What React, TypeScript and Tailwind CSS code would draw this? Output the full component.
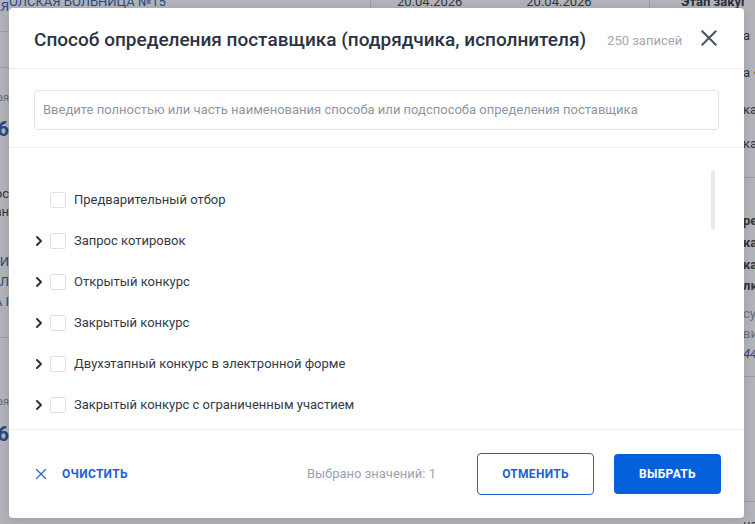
import React from 'react';

const items = [
  { label: 'Предварительный отбор', nested: false },
  { label: 'Запрос котировок', nested: true },
  { label: 'Открытый конкурс', nested: true },
  { label: 'Закрытый конкурс', nested: true },
  { label: 'Двухэтапный конкурс в электронной форме', nested: true },
  { label: 'Закрытый конкурс с ограниченным участием', nested: true },
];

function Chevron() {
  return (
    <svg width="10" height="12" viewBox="0 0 10 12" fill="none">
      <path d="M3 2l4 4-4 4" stroke="#2b3240" strokeWidth="2" strokeLinecap="round" strokeLinejoin="round" />
    </svg>
  );
}

function Cross({ size, color, width }: { size: number; color: string; width: number }) {
  return (
    <svg width={size} height={size} viewBox="0 0 16 16" fill="none">
      <path d="M2 2l12 12M14 2L2 14" stroke={color} strokeWidth={width} strokeLinecap="round" />
    </svg>
  );
}

// the page behind the dialog, only its edges show
function Backdrop() {
  return (
    <div className="flex h-full w-full bg-white text-[13px]">
      <div className="w-[9px] shrink-0 overflow-hidden">
        <div className="flex w-[200px] -ml-[191px] flex-col items-end whitespace-nowrap">
          <div className="h-[32px] border-b border-[#d9dde3] text-[#2c5cad] leading-[14px]">ГОРОДСКАЯ</div>
          <div className="h-[36px] w-full border-b border-[#d9dde3]" />
          <div className="mt-[22px] text-[11px] text-[#8b93a3]">Начальная</div>
          <div className="mt-[10px] text-[20px] font-bold text-[#2c5cad] leading-[24px]">1 246</div>
          <div className="mt-[44px] text-[#3b4150] leading-[18px]">Вопрос</div>
          <div className="text-[#3b4150] leading-[18px]">Наличие ан</div>
          <div className="mt-[31px] text-[#2c5cad] leading-[20px]">ПОСТАВКИ</div>
          <div className="text-[#2c5cad] leading-[20px]">МАТЕРИАЛ</div>
          <div className="text-[#2c5cad] leading-[20px]">СРЕДСТВА І</div>
          <div className="mt-[25px] h-px w-full bg-[#d9dde3]" />
          <div className="mt-[56px] text-[11px] text-[#8b93a3]">Начальная</div>
          <div className="mt-[12px] text-[20px] font-bold text-[#2c5cad] leading-[24px]">926</div>
        </div>
      </div>
      <div className="min-w-0 flex-1 overflow-hidden">
        <div className="flex h-[8px] overflow-hidden whitespace-nowrap text-[13px] leading-[12px]">
          <div className="-mt-[4px] -ml-[9px] w-[371px] shrink-0 border-r border-[#d9dde3] pl-[9px] text-[#2c5cad]">ОЛСКАЯ БОЛЬНИЦА №15"</div>
          <div className="-mt-[4px] flex w-[279px] shrink-0 gap-[64px] border-r border-[#d9dde3] pl-[26px] text-[#3b4150]">
            <span>20.04.2026</span>
            <span>20.04.2026</span>
          </div>
          <div className="-mt-[4px] shrink-0 pl-[31px] font-bold text-[#2d3341]">Этап закупки</div>
        </div>
      </div>
      <div className="w-[11px] shrink-0 overflow-hidden text-[13px]">
        <div className="-ml-[1px] w-[120px] whitespace-nowrap text-[#3b4150]">
          <div className="mt-[27px] leading-[18px]">а</div>
          <div className="mt-[19px] leading-[18px]">а <span className="text-[#e07b2a]">•</span></div>
          <div className="mt-[19px] leading-[18px]">ка</div>
          <div className="mt-[16px] leading-[18px]">ка</div>
          <div className="mt-[24px] h-px bg-[#d9dde3]" />
          <div className="mt-[32px] font-bold leading-[22px]">ре</div>
          <div className="font-bold leading-[22px]">ка</div>
          <div className="font-bold leading-[22px]">ка</div>
          <div className="font-bold leading-[20px]">лк</div>
          <div className="mt-[8px] leading-[20px] text-[#8b93a3]">су</div>
          <div className="leading-[20px] text-[#8b93a3]">ви</div>
          <div className="leading-[20px] italic text-[#2c5cad]">44</div>
          <div className="mt-[12px] h-px bg-[#d9dde3]" />
          <div className="mt-[124px] h-px bg-[#d9dde3]" />
          <div className="mt-[14px] leading-[18px]">на</div>
        </div>
      </div>
    </div>
  );
}

export default function App() {
  return (
    <div className="relative h-[524px] w-[755px] overflow-hidden" style={{ fontFamily: 'Roboto, "Noto Sans", sans-serif' }}>
      <Backdrop />
      <div className="absolute inset-0 bg-[rgba(31,37,51,0.35)]" />
      <div className="absolute left-[9px] top-[8px] flex h-[510px] w-[735px] flex-col rounded-[4px] bg-white shadow-[0_2px_10px_rgba(0,0,0,0.12)]">
        <div className="flex h-[61px] shrink-0 items-center border-b border-[#eceef2] pl-[25px] pr-[23px]">
          <h2 className="pt-[4px] text-[19px] font-medium leading-[24px] text-[#2d3341] whitespace-nowrap">
            Способ определения поставщика (подрядчика, исполнителя)
          </h2>
          <span className="ml-[21px] pt-[6px] text-[13px] text-[#a2a8b4]">250 записей</span>
          <button className="ml-auto flex h-[24px] w-[24px] items-center justify-center">
            <Cross size={18} color="#4b5161" width={1.8} />
          </button>
        </div>

        <div className="shrink-0 border-b border-[#eceef2] px-[25px] pb-[17px] pt-[21px]">
          <div className="flex h-[40px] items-center rounded-[4px] border border-[#e1e4e9] px-[8px] text-[13px] text-[#8e96a6]">
            Введите полностью или часть наименования способа или подспособа определения поставщика
          </div>
        </div>

        <div className="relative flex-1 overflow-hidden pt-[31px]">
          {items.map((it) => (
            <div key={it.label} className="flex h-[41px] items-center pl-[25px]">
              <div className="flex w-[16px] justify-start">{it.nested && <Chevron />}</div>
              <div className="h-[16px] w-[16px] rounded-[2px] border border-[#dde1e7] bg-white" />
              <span className="ml-[8px] text-[13px] text-[#333a48]">{it.label}</span>
            </div>
          ))}
          <div className="absolute right-[29px] top-[22px] h-[60px] w-[4px] rounded-full bg-[#e6e9ee]" />
        </div>

        <div className="flex h-[89px] shrink-0 items-center border-t border-[#eceef2] pl-[26px] pr-[23px]">
          <button className="flex items-center gap-[15px] text-[12px] font-bold tracking-[0.3px] text-[#1f61cf]">
            <Cross size={12} color="#2a66d0" width={1.7} />
            ОЧИСТИТЬ
          </button>
          <span className="ml-auto mr-[41px] text-[13px] text-[#9aa2b2]">Выбрано значений: 1</span>
          <button className="h-[42px] w-[117px] rounded-[4px] border border-[#1f61cf] text-[12px] font-bold tracking-[0.3px] text-[#1f61cf]">
            ОТМЕНИТЬ
          </button>
          <button className="ml-[20px] h-[40px] w-[107px] rounded-[4px] bg-[#0561db] text-[12px] font-bold tracking-[0.3px] text-white">
            ВЫБРАТЬ
          </button>
        </div>
      </div>
    </div>
  );
}
